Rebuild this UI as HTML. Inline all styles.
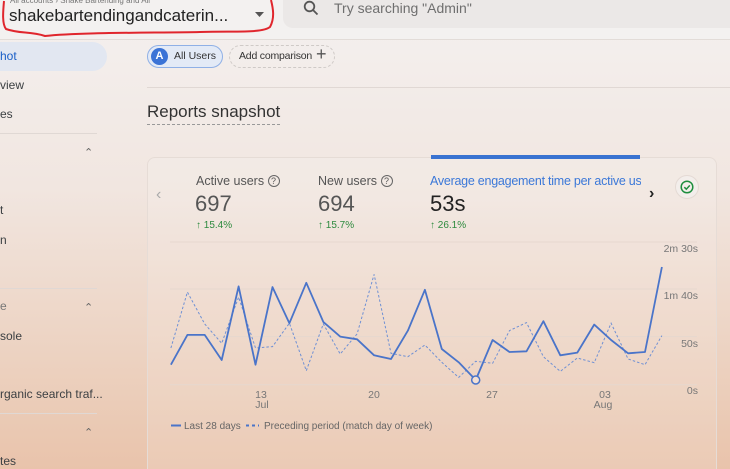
<!DOCTYPE html>
<html style="width:730px;height:469px;overflow:hidden"><head><style>
*{margin:0;padding:0;box-sizing:border-box}
body{width:730px;height:469px;overflow:hidden;position:relative;font-family:"Liberation Sans",Arial,sans-serif;background:linear-gradient(#f4f1f0 0%,#f1e6e0 40%,#ebcdb9 85%,#e9c3ab 100%);color:#3c4043}
.a{position:absolute;white-space:nowrap}
.t{font-size:12px;color:#3c4043}
.hr{position:absolute;height:1px;background:#e0d8d4}
.q{border:1px solid #666;border-radius:50%;display:inline-block;width:12px;height:12px;font-size:9px;text-align:center;line-height:11px;vertical-align:1px}
</style></head><body>
<div class="a" style="left:0;top:0;width:730px;height:40px;background:#f3f1f0;border-bottom:1px solid #e2dcd8"></div>
<div class="a" style="left:283px;top:-10px;width:460px;height:38px;background:#ebe8e7;border-radius:10px"></div>
<svg class="a" style="left:303px;top:0" width="16" height="16" viewBox="0 0 16 16"><circle cx="6.5" cy="6.5" r="4.8" fill="none" stroke="#555" stroke-width="1.8"/><path d="M10 10l4.5 4.5" stroke="#555" stroke-width="1.8"/></svg>
<div class="a" style="left:334px;top:0;font-size:14px;color:#6f6f6f">Try searching "Admin"</div>
<div class="a" style="left:10px;top:-4px;font-size:8px;color:#777">All accounts › Shake Bartending and All</div>
<div class="a" style="left:9px;top:6px;font-size:17px;color:#222">shakebartendingandcaterin...</div>
<svg class="a" style="left:255px;top:12px" width="10" height="6"><path d="M0 0h9l-4.5 5z" fill="#555"/></svg>
<svg class="a" style="left:0;top:0" width="280" height="40"><path d="M4 1 C3 12 2 24 6 29 C20 34 30 31 45 36 C80 32 160 33 200 32 C240 31 262 33 270 27 C275 18 273 8 271 0" fill="none" stroke="#e0262d" stroke-width="2"/></svg>
<div class="a" style="left:-20px;top:42px;width:127px;height:29px;background:#e2e7f1;border-radius:15px"></div>
<div class="a t" style="left:0;top:49px;color:#1a5fc7">hot</div>
<div class="a t" style="left:0;top:78px">view</div>
<div class="a t" style="left:0;top:107px">es</div>
<div class="hr" style="left:0;top:133px;width:97px"></div>
<div class="a" style="left:84px;top:146px;font-size:11px;color:#666">⌃</div>
<div class="a t" style="left:0;top:203px">t</div>
<div class="a t" style="left:0;top:233px">n</div>
<div class="hr" style="left:0;top:288px;width:97px"></div>
<div class="a t" style="left:0;top:299px;color:#777">e</div>
<div class="a" style="left:84px;top:301px;font-size:11px;color:#666">⌃</div>
<div class="a t" style="left:0;top:329px">sole</div>
<div class="a t" style="left:0;top:387px">rganic search traf...</div>
<div class="hr" style="left:0;top:413px;width:97px"></div>
<div class="a" style="left:84px;top:426px;font-size:11px;color:#666">⌃</div>
<div class="a t" style="left:0;top:454px">tes</div>
<div class="a" style="left:147px;top:45px;width:76px;height:23px;border:1px solid #8fb0e6;border-radius:12px;background:#e3eaf6"></div>
<div class="a" style="left:151px;top:48px;width:17px;height:17px;border-radius:50%;background:#3b73d6;color:#fff;font-size:11px;font-weight:bold;text-align:center;line-height:17px">A</div>
<div class="a" style="left:174px;top:50px;font-size:10.5px;color:#333">All Users</div>
<div class="a" style="left:229px;top:45px;width:106px;height:23px;border:1px dashed #cfcac7;border-radius:12px"></div>
<div class="a" style="left:239px;top:50px;font-size:10.5px;color:#333;letter-spacing:-0.2px">Add comparison</div>
<div class="a" style="left:316px;top:44px;font-size:18px;color:#555">+</div>
<div class="hr" style="left:147px;top:87px;width:583px"></div>
<div class="a" style="left:147px;top:102px;font-size:17px;color:#333;border-bottom:1px dashed #999;padding-bottom:2px">Reports snapshot</div>
<div class="a" style="left:147px;top:157px;width:570px;height:320px;border:1px solid #e6dcd6;border-radius:8px;background:rgba(255,255,255,0.12)"></div>
<div class="a" style="left:431px;top:155px;width:209px;height:4px;background:#3a73d1"></div>
<div class="a" style="left:156px;top:186px;font-size:16px;color:#aaa">‹</div>
<div class="a" style="left:196px;top:174px;font-size:12.5px;color:#555">Active users <span class="q">?</span></div>
<div class="a" style="left:195px;top:191px;font-size:22px;color:#555">697</div>
<div class="a" style="left:196px;top:220px;font-size:10px;color:#2d8a3e">↑ 15.4%</div>
<div class="a" style="left:318px;top:174px;font-size:12.5px;color:#555">New users <span class="q">?</span></div>
<div class="a" style="left:318px;top:191px;font-size:22px;color:#555">694</div>
<div class="a" style="left:318px;top:220px;font-size:10px;color:#2d8a3e">↑ 15.7%</div>
<div class="a" style="left:430px;top:174px;font-size:12.5px;color:#3b78d8;width:211px;overflow:hidden;letter-spacing:-0.25px">Average engagement time per active users</div>
<div class="a" style="left:430px;top:191px;font-size:22px;color:#222">53s</div>
<div class="a" style="left:430px;top:220px;font-size:10px;color:#2d8a3e">↑ 26.1%</div>
<div class="a" style="left:649px;top:185px;font-size:16px;color:#222;font-weight:bold">›</div>
<div class="a" style="left:675px;top:175px;width:24px;height:24px;border-radius:50%;border:1px solid #e4dad4;background:#f3eeeb"></div>
<svg class="a" style="left:680px;top:180px" width="14" height="14"><circle cx="7" cy="7" r="5.8" fill="none" stroke="#1e8e3e" stroke-width="1.5"/><path d="M4.3 7.2l2 2 3.5-3.8" fill="none" stroke="#1e8e3e" stroke-width="1.5"/></svg>
<svg class="a" style="left:0;top:0" width="730" height="469">
<g stroke="#e6d8cf" stroke-width="1"><line x1="170" y1="242" x2="697" y2="242"/><line x1="170" y1="289" x2="697" y2="289"/><line x1="170" y1="336.6" x2="697" y2="336.6"/><line x1="170" y1="384.7" x2="697" y2="384.7"/></g>
<polyline fill="none" stroke="#6f90d4" stroke-width="1" stroke-dasharray="2.5,2" points="170.9,348 187.4,292.1 204.7,323.9 221.7,343.3 238.6,297.1 255.5,348 272.5,346.6 289.4,323.2 306.3,370.7 323.3,323.9 340.2,354 357.1,333.9 374.1,274.4 391,353.3 407.9,356.7 424.9,345 441.8,362.3 458.7,377.4 475.7,361.3 492.6,363.3 509.5,330.6 526.5,322.6 543.4,356.7 560.3,371.4 577.3,358 594.2,362.7 611.1,323.2 628.1,359 645,364.7 661.9,335.6"/>
<polyline fill="none" stroke="#4a74c9" stroke-width="1.8" stroke-linejoin="round" points="170.9,364.7 187.4,334.9 204.7,334.9 221.7,360 238.6,286.4 255.5,364.7 272.5,287.1 289.4,323.2 306.3,282.8 323.3,321.9 340.2,336.6 357.1,339.3 374.1,355.3 391,359 407.9,330.6 424.9,289.8 441.8,349 458.7,362.3 475.7,380 492.6,340 509.5,352 526.5,351.3 543.4,321.2 560.3,355.3 577.3,352.6 594.2,324.6 611.1,340 628.1,353.3 645,352 661.9,267"/>
<circle cx="475.7" cy="380" r="4" fill="#f3e0d4" stroke="#4a74c9" stroke-width="1.5"/>
<g font-size="10.5" fill="#777" font-family="Liberation Sans,sans-serif">
<text x="698" y="252" text-anchor="end">2m 30s</text><text x="698" y="299" text-anchor="end">1m 40s</text><text x="698" y="347" text-anchor="end">50s</text><text x="698" y="394" text-anchor="end">0s</text>
<text x="261" y="398" text-anchor="middle">13</text><text x="262" y="408" text-anchor="middle">Jul</text>
<text x="374" y="398" text-anchor="middle">20</text><text x="492" y="398" text-anchor="middle">27</text>
<text x="605" y="398" text-anchor="middle">03</text><text x="603" y="408" text-anchor="middle">Aug</text></g>
<g font-size="10" fill="#666" font-family="Liberation Sans,sans-serif"><text x="184" y="429">Last 28 days</text><text x="264" y="429">Preceding period (match day of week)</text></g>
<line x1="171" y1="425.5" x2="181" y2="425.5" stroke="#4a74c9" stroke-width="2"/>
<line x1="246" y1="425.5" x2="259" y2="425.5" stroke="#4a74c9" stroke-width="2" stroke-dasharray="3,3"/>
</svg>
</body></html>
